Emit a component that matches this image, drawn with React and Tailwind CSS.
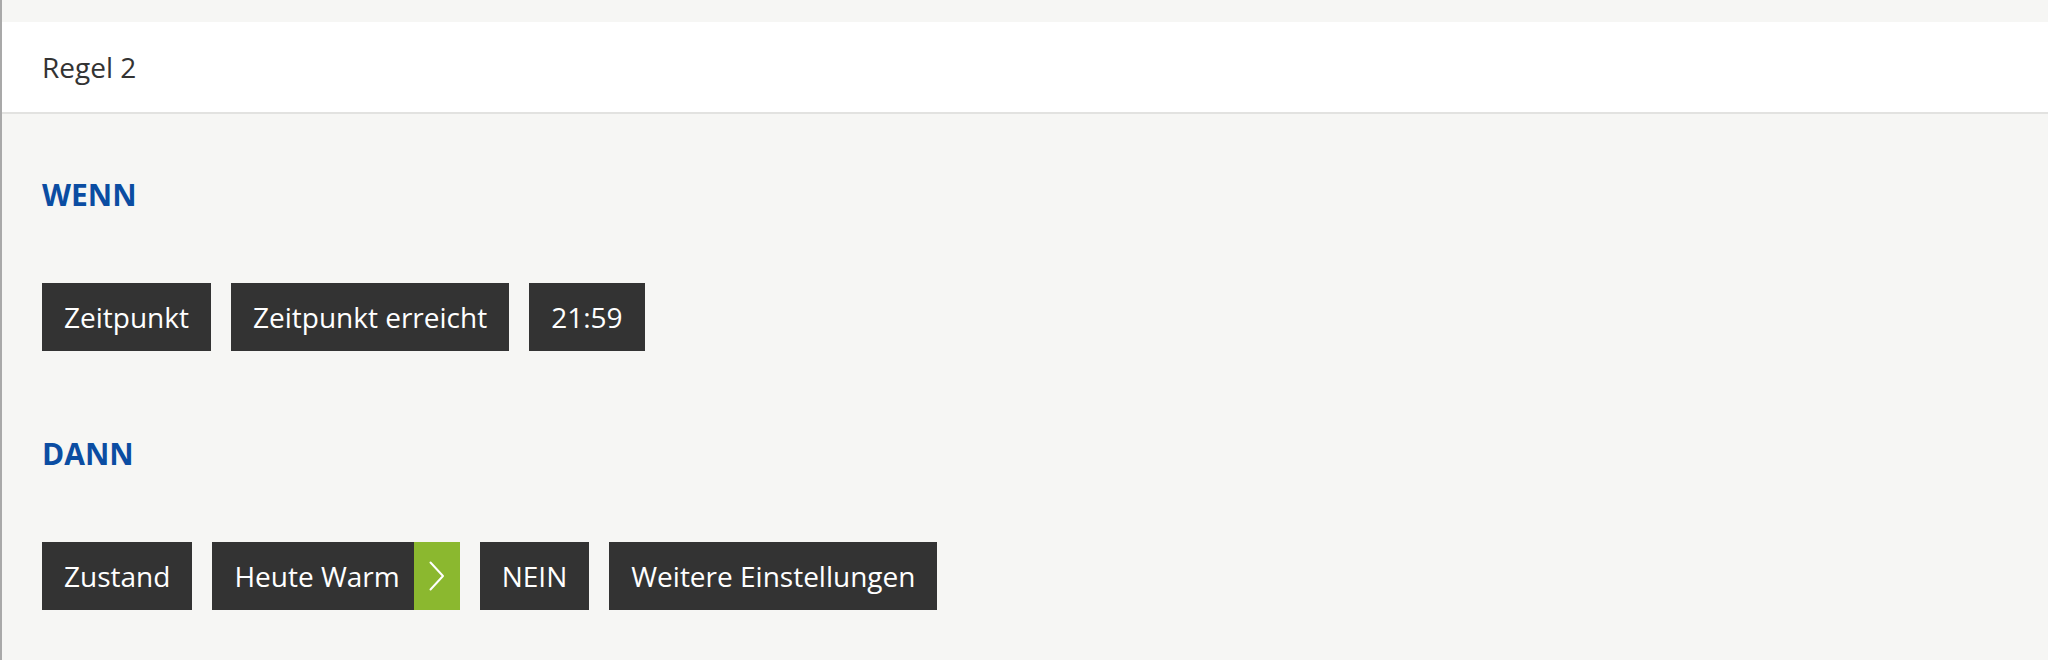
function Chip({ label, arrow }) {
  return (
    <div className="flex h-[68px] items-stretch bg-[#333333] text-white">
      <span
        className={
          arrow
            ? "flex items-center pl-[22px] pr-[14px] text-[28px] leading-none"
            : "flex items-center px-[22px] text-[28px] leading-none"
        }
      >
        {label}
      </span>
      {arrow && (
        <span className="flex w-[46px] items-center justify-center bg-[#8bb82f]">
          <svg width="16" height="30" viewBox="0 0 16 30" fill="none">
            <path d="M1.5 1.5 L14 15 L1.5 28.5" stroke="#ffffff" strokeWidth="2" strokeLinecap="round" strokeLinejoin="round" />
          </svg>
        </span>
      )}
    </div>
  );
}

function Section({ title, items }) {
  return (
    <section className="flex flex-col gap-[68px]">
      <h2 className="text-[30px] font-bold leading-[41px] text-[#0b4da2]">{title}</h2>
      <div className="flex gap-[20px]">
        {items.map((item) => (
          <Chip key={item.label} label={item.label} arrow={item.arrow} />
        ))}
      </div>
    </section>
  );
}

export default function App() {
  return (
    <div
      className="flex h-[660px] w-full flex-col border-l-2 border-[#a9a9a9] bg-[#f6f6f4] text-[#333333]"
      style={{ fontFamily: '"Open Sans", "Liberation Sans", sans-serif' }}
    >
      <div className="h-[22px] shrink-0" />
      <header className="flex h-[92px] shrink-0 items-center border-b-2 border-[#e2e2e0] bg-white px-[40px]">
        <p className="text-[28px] leading-[38px]">Regel 2</p>
      </header>

      <div className="flex flex-col gap-[82px] px-[40px] pt-[60px]">
        <Section
          title="WENN"
          items={[{ label: "Zeitpunkt" }, { label: "Zeitpunkt erreicht" }, { label: "21:59" }]}
        />
        <Section
          title="DANN"
          items={[
            { label: "Zustand" },
            { label: "Heute Warm", arrow: true },
            { label: "NEIN" },
            { label: "Weitere Einstellungen" },
          ]}
        />
      </div>
    </div>
  );
}
